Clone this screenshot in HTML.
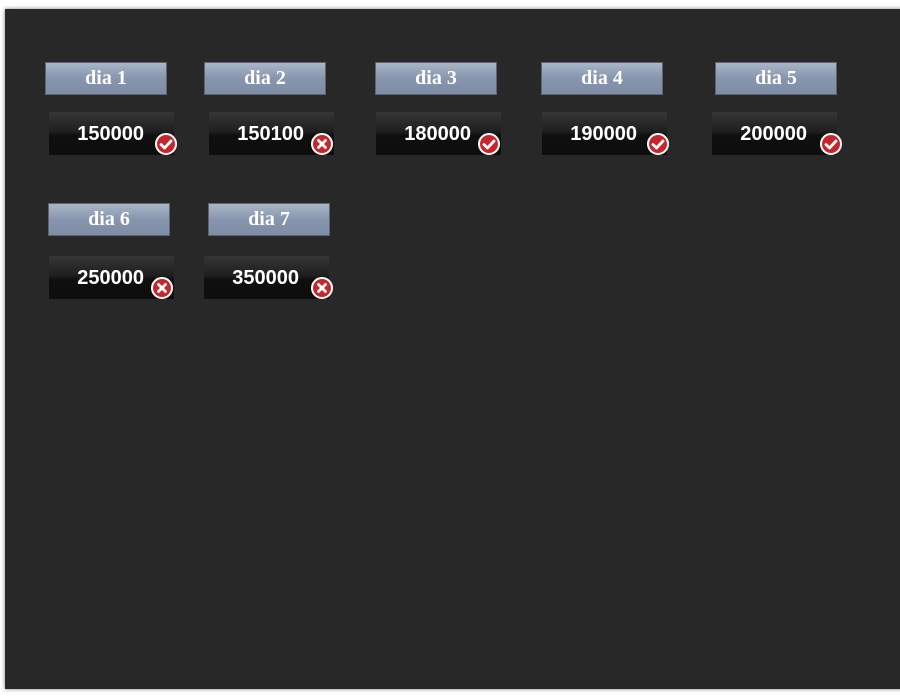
<!DOCTYPE html>
<html><head><style>
body{margin:0;width:900px;height:700px;background:#fff;position:relative;overflow:hidden;font-family:"Liberation Sans",sans-serif}
.panel{position:absolute;left:5px;top:9px;width:900px;height:680px;background:#282828;box-shadow:0 0 4px rgba(0,0,0,.5)}
.lab{position:absolute;width:120px;height:31px;border:1px solid #5e6470;background:linear-gradient(#a9b5c7,#8796ae 50%,#7e8da5);color:#fff;font-family:"Liberation Serif",serif;font-weight:bold;font-size:20px;text-align:center;line-height:31px}
.val{position:absolute;width:125px;height:43px;background:linear-gradient(#363636,#1f1f1f 45%,#0f0f0f 55%,#0e0e0e);color:#fff;font-weight:bold;font-size:20px;text-align:right;box-sizing:border-box;padding-right:30px;line-height:45px}
.ic{position:absolute;width:22px;height:22px}
</style></head><body>
<div class="panel"></div>
<div class="lab" style="left:45px;top:62px">dia 1</div>
<div class="lab" style="left:204px;top:62px">dia 2</div>
<div class="lab" style="left:375px;top:62px">dia 3</div>
<div class="lab" style="left:541px;top:62px">dia 4</div>
<div class="lab" style="left:715px;top:62px">dia 5</div>
<div class="lab" style="left:48px;top:203px">dia 6</div>
<div class="lab" style="left:208px;top:203px">dia 7</div>
<div class="val" style="left:49px;top:112px">150000</div>
<div class="val" style="left:209px;top:112px">150100</div>
<div class="val" style="left:376px;top:112px">180000</div>
<div class="val" style="left:542px;top:112px">190000</div>
<div class="val" style="left:712px;top:112px">200000</div>
<div class="val" style="left:49px;top:256px">250000</div>
<div class="val" style="left:204px;top:256px">350000</div>
<svg width="0" height="0" style="position:absolute"><defs>
<symbol id="ok" viewBox="0 0 22 22"><circle cx="11" cy="11" r="10" fill="#c9252d" stroke="#fff" stroke-width="2"/><path d="M6 11.5l3.5 3.5 6.5-7" fill="none" stroke="#fff" stroke-width="2.8" stroke-linecap="round" stroke-linejoin="round"/></symbol>
<symbol id="no" viewBox="0 0 22 22"><circle cx="11" cy="11" r="10" fill="#c9252d" stroke="#fff" stroke-width="2"/><path d="M7.5 7.5l7 7M14.5 7.5l-7 7" fill="none" stroke="#fff" stroke-width="2.8" stroke-linecap="round"/></symbol>
</defs></svg>
<svg class="ic" style="left:155px;top:133px"><use href="#ok"/></svg>
<svg class="ic" style="left:311px;top:133px"><use href="#no"/></svg>
<svg class="ic" style="left:478px;top:133px"><use href="#ok"/></svg>
<svg class="ic" style="left:647px;top:133px"><use href="#ok"/></svg>
<svg class="ic" style="left:820px;top:133px"><use href="#ok"/></svg>
<svg class="ic" style="left:151px;top:277px"><use href="#no"/></svg>
<svg class="ic" style="left:311px;top:277px"><use href="#no"/></svg>
</body></html>
